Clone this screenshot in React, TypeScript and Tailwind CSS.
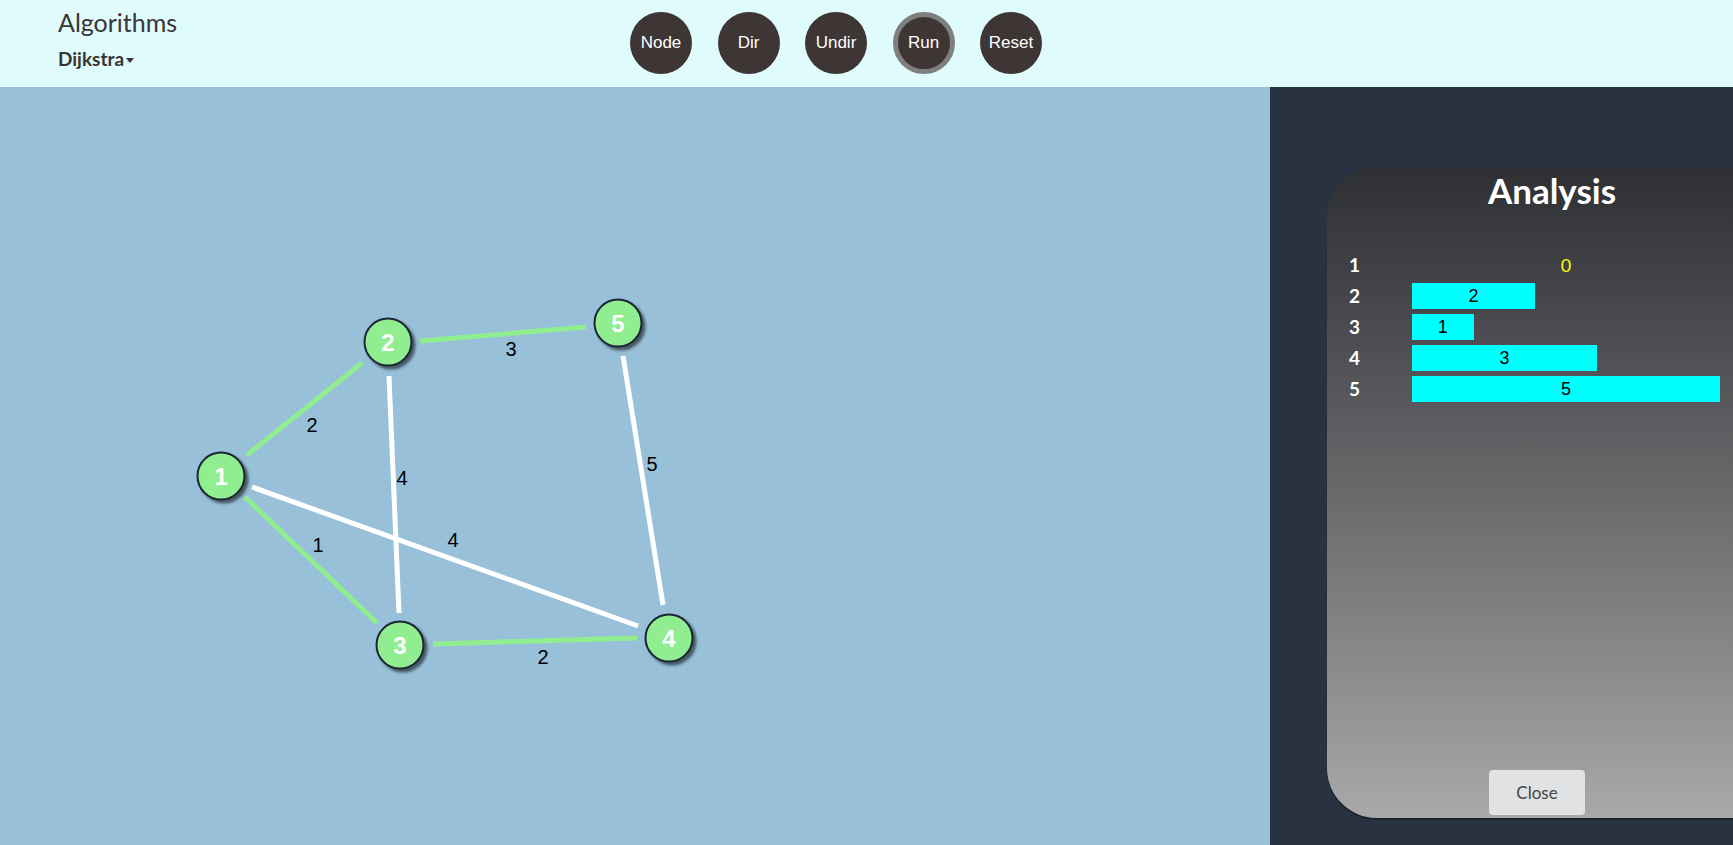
import React from 'react'

// graph canvas coordinates (origin = top-left of the blue canvas)
const NODES = [
  { id: 1, x: 221, y: 389 },
  { id: 2, x: 388, y: 255 },
  { id: 5, x: 618, y: 236 },
  { id: 3, x: 400, y: 558 },
  { id: 4, x: 669, y: 551 },
]

const EDGES = [
  { x1: 247, y1: 368, x2: 362, y2: 276, green: true },
  { x1: 420, y1: 254, x2: 586, y2: 240, green: true },
  { x1: 389, y1: 289, x2: 399, y2: 526, green: false },
  { x1: 623, y1: 269, x2: 663, y2: 518, green: false },
  { x1: 252, y1: 400, x2: 638, y2: 539, green: false },
  { x1: 245, y1: 410, x2: 377, y2: 536, green: true },
  { x1: 433, y1: 557, x2: 637, y2: 551, green: true },
]

const WEIGHTS = [
  { t: '2', x: 312, y: 338 },
  { t: '3', x: 511, y: 262 },
  { t: '4', x: 402, y: 391 },
  { t: '5', x: 652, y: 377 },
  { t: '1', x: 318, y: 458 },
  { t: '4', x: 453, y: 453 },
  { t: '2', x: 543, y: 570 },
]

const DIST = [
  { node: 1, d: 0 },
  { node: 2, d: 2 },
  { node: 3, d: 1 },
  { node: 4, d: 3 },
  { node: 5, d: 5 },
]

const BUTTONS = ['Node', 'Dir', 'Undir', 'Run', 'Reset']

function Header() {
  return (
    <header className="flex h-[87px] shrink-0 bg-[#e0fbfc] font-['Lato',sans-serif] text-[#3b3434]">
      <div className="w-[630px] shrink-0 pl-[58px] pt-[6px]">
        <div className="text-[25px] leading-[32px]">Algorithms</div>
        <div className="mt-[10px] flex items-center text-[19px] font-bold leading-[22px]">
          Dijkstra
          <span className="ml-[2px] mt-[2px] h-0 w-0 border-x-[4.5px] border-t-[5px] border-x-transparent border-t-[#3b3434]" />
        </div>
      </div>
      <div className="flex items-start gap-[25.5px] pt-[12px]">
        {BUTTONS.map(b => (
          <button
            key={b}
            className={
              'flex h-[62px] w-[62px] items-center justify-center rounded-full bg-[#3e3535] font-["Liberation_Sans",Arial,sans-serif] text-[17px] text-white ' +
              (b === 'Run' ? 'border-[5px] border-[#7f7f7f]' : '')
            }
          >
            {b}
          </button>
        ))}
      </div>
    </header>
  )
}

function Graph() {
  return (
    <div className="relative flex-1 bg-[#98c1d9]">
      <svg className="absolute inset-0 h-full w-full" xmlns="http://www.w3.org/2000/svg">
        {EDGES.map((e, i) => (
          <line
            key={i}
            x1={e.x1}
            y1={e.y1}
            x2={e.x2}
            y2={e.y2}
            stroke={e.green ? '#90ee90' : '#ffffff'}
            strokeWidth={5}
          />
        ))}
        {WEIGHTS.map((w, i) => (
          <text
            key={i}
            x={w.x}
            y={w.y}
            textAnchor="middle"
            dominantBaseline="central"
            fontFamily="Liberation Sans, Arial, sans-serif"
            fontSize={20}
            fill="#000"
          >
            {w.t}
          </text>
        ))}
      </svg>
      {NODES.map(n => (
        <div
          key={n.id}
          className="absolute flex h-[49px] w-[49px] -translate-x-1/2 -translate-y-1/2 items-center justify-center rounded-full border-2 border-[#1c2533] bg-[#90ee90] font-['Liberation_Sans',Arial,sans-serif] text-[24px] font-bold text-white shadow-[3px_3px_3px_rgba(0,0,0,0.55)]"
          style={{ left: n.x, top: n.y }}
        >
          {n.id}
        </div>
      ))}
    </div>
  )
}

function Analysis() {
  return (
    <aside className="w-[463px] shrink-0 overflow-hidden bg-[#293241] pl-[57px] pt-[80px]">
      <div className="flex h-[651px] w-[450px] flex-col rounded-l-[50px] bg-gradient-to-b from-[#2f3034] to-[#a9a9a9] pb-[3px] pt-[2px] font-['Lato',sans-serif] shadow-[0_2px_1px_rgba(0,0,0,0.35)]">
        <h2 className="text-center text-[35px] font-bold leading-[42px] text-white">Analysis</h2>
        <div className="mt-[41px] flex flex-col gap-[5px] pl-[22px]">
          {DIST.map(r => (
            <div key={r.node} className="flex h-[26px] items-center">
              <span className="w-[63px] text-[19px] font-bold text-white">{r.node}</span>
              {r.d === 0 ? (
                <span className="w-[308px] text-center text-[18px] text-[#ffff00]">0</span>
              ) : (
                <div
                  className="flex h-[26px] items-center justify-center bg-[#00ffff] font-['Liberation_Sans',Arial,sans-serif] text-[18px] text-black"
                  style={{ width: r.d * 61.6 }}
                >
                  {r.d}
                </div>
              )}
            </div>
          ))}
        </div>
        <button className="ml-[162px] mt-auto h-[45px] w-[96px] rounded-[4px] bg-[#e1e2e4] text-[17px] text-[#444]">
          Close
        </button>
      </div>
    </aside>
  )
}

export default function App() {
  return (
    <div className="flex h-[845px] w-full flex-col overflow-hidden">
      <Header />
      <main className="flex flex-1">
        <Graph />
        <Analysis />
      </main>
    </div>
  )
}
